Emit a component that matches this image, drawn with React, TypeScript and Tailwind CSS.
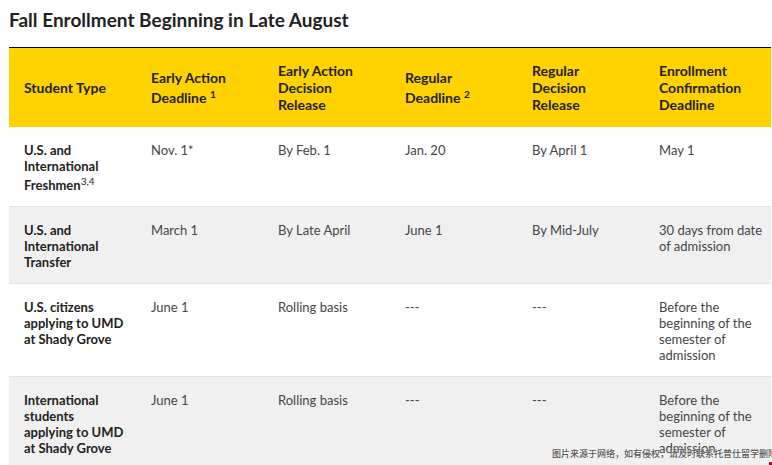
import React from 'react';

type Row = {
  type: React.ReactNode;
  cells: string[];
  shade: boolean;
};

const rows: Row[] = [
  {
    type: (
      <>
        U.S. and International Freshmen
        <sup className="top-0 align-[5px] font-normal text-[10px] leading-[15px]">3,4</sup>
      </>
    ),
    cells: ['Nov. 1*', 'By Feb. 1', 'Jan. 20', 'By April 1', 'May 1'],
    shade: false,
  },
  {
    type: 'U.S. and International Transfer',
    cells: ['March 1', 'By Late April', 'June 1', 'By Mid-July', '30 days from date of admission'],
    shade: true,
  },
  {
    type: 'U.S. citizens applying to UMD at Shady Grove',
    cells: ['June 1', 'Rolling basis', '---', '---', 'Before the beginning of the semester of admission'],
    shade: false,
  },
  {
    type: 'International students applying to UMD at Shady Grove',
    cells: ['June 1', 'Rolling basis', '---', '---', 'Before the beginning of the semester of admission'],
    shade: true,
  },
];

const headCls = 'pl-[15px] text-left align-middle text-[14px] leading-[17px] font-bold text-[#222]';

const App: React.FC = () => {
  return (
    <div className="relative w-[772px] h-[465px] overflow-hidden bg-white font-['Lato',sans-serif] text-[#222]">
      <h2 className="px-[9px] pt-[8px] text-[19px] leading-[24px] font-bold text-[#222]">
        Fall Enrollment Beginning in Late August
      </h2>

      <table className="ml-[9px] mt-[15px] w-[762px] table-fixed border-collapse border-t border-black">
        <thead>
          <tr className="bg-[#ffd200] h-[79px]">
            <th className={`w-[127px] pr-[11px] ${headCls}`}>Student Type</th>
            <th className={`w-[127px] pr-[8px] ${headCls}`}>
              Early Action Deadline{' '}
              <sup className="top-0 align-[5px] text-[10px] leading-[17px]">1</sup>
            </th>
            <th className={`w-[127px] pr-[8px] ${headCls}`}>Early Action Decision Release</th>
            <th className={`w-[127px] pr-[8px] ${headCls}`}>
              Regular Deadline{' '}
              <sup className="top-0 align-[5px] text-[10px] leading-[17px]">2</sup>
            </th>
            <th className={`w-[127px] pr-[8px] ${headCls}`}>Regular Decision Release</th>
            <th className={`w-[127px] pr-[4px] ${headCls}`}>Enrollment Confirmation Deadline</th>
          </tr>
        </thead>
        <tbody>
          {rows.map((r, i) => (
            <tr key={i} className={`${r.shade ? 'bg-[#f0f0f0]' : 'bg-white'} border-b border-[#e2e2e2]`}>
              <td className="pl-[15px] pr-[11px] pt-[15px] pb-[13px] align-top text-[13px] leading-[16px] font-bold text-[#222]">
                {r.type}
              </td>
              {r.cells.map((c, j) => (
                <td
                  key={j}
                  className={`pl-[15px] ${j === 4 ? 'pr-[4px]' : 'pr-[8px]'} pt-[15px] pb-[13px] align-top text-[13px] leading-[16px] text-[#454545]`}
                >
                  {c}
                </td>
              ))}
            </tr>
          ))}
        </tbody>
      </table>

      <div className="absolute left-[552px] right-0 bottom-[5px] text-[9px] leading-[12px] font-medium text-[#555] font-['Noto_Sans_CJK_SC',sans-serif] whitespace-nowrap overflow-hidden [text-shadow:0_0_2px_#fff]">
        图片来源于网络，如有侵权，请及时联系托普仕留学删除
      </div>
      <div className="absolute right-0 bottom-0 w-[3px] h-[3px] bg-[#c00]" />
    </div>
  );
};

export default App;
